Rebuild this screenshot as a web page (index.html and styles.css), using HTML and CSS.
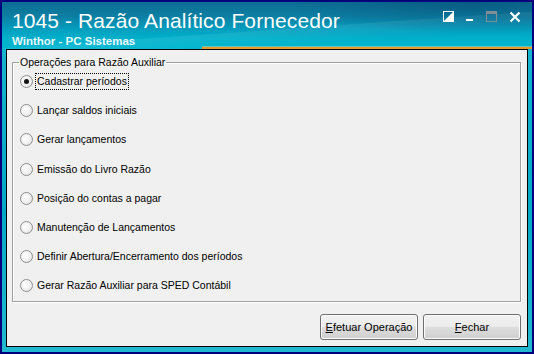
FILE: index.html
```html
<!DOCTYPE html>
<html lang="pt">
<head>
<meta charset="utf-8">
<title>1045 - Razão Analítico Fornecedor</title>
<link rel="stylesheet" href="styles.css">
</head>
<body>
<div class="window">
  <header class="titlebar">
    <div class="titles">
      <h1 class="title">1045 - Razão Analítico Fornecedor</h1>
      <div class="subtitle">Winthor - PC Sistemas</div>
    </div>
    <div class="controls">
      <svg class="ctl" width="11" height="11" viewBox="0 0 11 11"><rect x="0.5" y="0.5" width="10" height="10" fill="none" stroke="#fff"/><polygon points="10,1 10,10 1,10" fill="#fff"/></svg>
      <svg class="ctl" width="8" height="11" viewBox="0 0 8 11"><rect x="0" y="8" width="7" height="2" fill="#fff"/></svg>
      <svg class="ctl" width="11" height="11" viewBox="0 0 11 11"><rect x="0.5" y="0.5" width="10" height="10" fill="none" stroke="#7f8f95"/><rect x="0" y="0" width="11" height="3" fill="#7f8f95"/></svg>
      <svg class="ctl" width="12" height="12" viewBox="0 0 12 12"><path d="M1.5 1.5 L10.5 10.5 M10.5 1.5 L1.5 10.5" stroke="#fff" stroke-width="2.2"/></svg>
    </div>
    <div class="accent"></div>
  </header>
  <main class="content">
    <fieldset class="group">
      <legend class="legend">Operações para Razão Auxiliar</legend>
      <label class="option"><span class="radio checked"></span><span class="label focused">Cadastrar períodos</span></label>
      <label class="option"><span class="radio"></span><span class="label">Lançar saldos iniciais</span></label>
      <label class="option"><span class="radio"></span><span class="label">Gerar lançamentos</span></label>
      <label class="option"><span class="radio"></span><span class="label">Emissão do Livro Razão</span></label>
      <label class="option"><span class="radio"></span><span class="label">Posição do contas a pagar</span></label>
      <label class="option"><span class="radio"></span><span class="label">Manutenção de Lançamentos</span></label>
      <label class="option"><span class="radio"></span><span class="label">Definir Abertura/Encerramento dos períodos</span></label>
      <label class="option"><span class="radio"></span><span class="label">Gerar Razão Auxiliar para SPED Contábil</span></label>
    </fieldset>
    <div class="buttons">
      <button class="btn"><u>E</u>fetuar Operação</button>
      <button class="btn"><u>F</u>echar</button>
    </div>
  </main>
</div>
</body>
</html>
```
FILE: styles.css
```css
* { box-sizing: border-box; }
html, body { margin: 0; padding: 0; }
body { width: 534px; height: 354px; overflow: hidden; background: #000080; }

.window {
  width: 534px;
  height: 354px;
  border: 2px solid #00007c;
  background: linear-gradient(180deg, #1bb6cf 0%, #04a9c6 60%, #22b9d0 100%);
  display: flex;
  flex-direction: column;
  padding: 0 4px 5px 4px;
}

.titlebar {
  position: relative;
  height: 47px;
  margin: 0 -4px;
  padding: 8px 10px 0 10px;
  display: flex;
  justify-content: space-between;
  align-items: flex-start;
  background:
    radial-gradient(ellipse 260px 40px at 470px 4px, rgba(0,60,100,0.35), rgba(0,60,100,0) 70%),
    linear-gradient(176deg, rgba(255,255,255,0) 0%, rgba(255,255,255,0) 55%, rgba(255,255,255,0.08) 56%, rgba(255,255,255,0) 75%),
    linear-gradient(180deg, #0e6c93 0%, #0c7fa2 30%, #049ebf 58%, #00b1cb 78%, #00b6cf 100%);
}

.titles { display: flex; flex-direction: column; }

.title {
  margin: 0;
  font: 21px/22px "Liberation Sans", Arial, sans-serif;
  color: #fff;
  letter-spacing: 0.1px;
}

.subtitle {
  margin-top: 2px;
  font: bold 11.5px/14px "Liberation Sans", Arial, sans-serif;
  color: #eaf8fb;
}

.controls {
  display: flex;
  gap: 12px;
  align-items: flex-start;
  padding-top: 1px;
  margin-right: 1px;
}
.ctl { display: block; }

.accent {
  position: absolute;
  left: 200px;
  right: 0;
  bottom: 0;
  height: 2px;
  background: #e69a2e;
  box-shadow: 0 -1px 0 rgba(255,220,150,0.4);
}

.content {
  flex: 1;
  border: 1px solid #000;
  background: #f0f0f0;
  display: flex;
  flex-direction: column;
  padding: 5px 6px 6px 5px;
  font: 10.5px "Liberation Sans", Tahoma, Arial, sans-serif;
  color: #000;
}

.group {
  margin: 0;
  height: 247px;
  border: 1px solid #a0a0a0;
  box-shadow: 1px 1px 0 #fff, inset 1px 1px 0 #fff;
  padding: 0 0 0 8px;
  display: flex;
  flex-direction: column;
}

.legend {
  padding: 0 1px;
  margin-left: -2px;
  font-size: 10.5px;
  color: #000;
  line-height: 14px;
}

.option {
  display: flex;
  align-items: center;
  gap: 2px;
  height: 29.2px;
  flex: none;
}
.option:first-of-type { margin-top: -2px; }

.radio {
  width: 13px;
  height: 13px;
  margin-left: -1px;
  border-radius: 50%;
  border: 1px solid #8e8f8f;
  background: radial-gradient(circle at 40% 40%, #ffffff 0%, #f0f0f0 55%, #d4d4d4 100%);
  flex: none;
  position: relative;
}
.radio.checked::after {
  content: "";
  position: absolute;
  left: 3px;
  top: 3px;
  width: 5px;
  height: 5px;
  border-radius: 50%;
  background: #111;
}

.label { padding: 1px 1px; border: 1px dotted transparent; line-height: 13px; }
.label.focused { border-color: #000; }

.buttons {
  margin-top: auto;
  display: flex;
  justify-content: flex-end;
  gap: 5px;
}

.btn {
  width: 98px;
  height: 26px;
  border: 1px solid #707070;
  border-radius: 3px;
  background: linear-gradient(180deg, #f2f2f2 0%, #ebebeb 48%, #dddddd 52%, #cfcfcf 100%);
  box-shadow: inset 0 0 0 1px #fcfcfc;
  font: 11px "Liberation Sans", Tahoma, Arial, sans-serif;
  color: #000;
  padding: 0;
}
.btn u { text-decoration: underline; }
```
